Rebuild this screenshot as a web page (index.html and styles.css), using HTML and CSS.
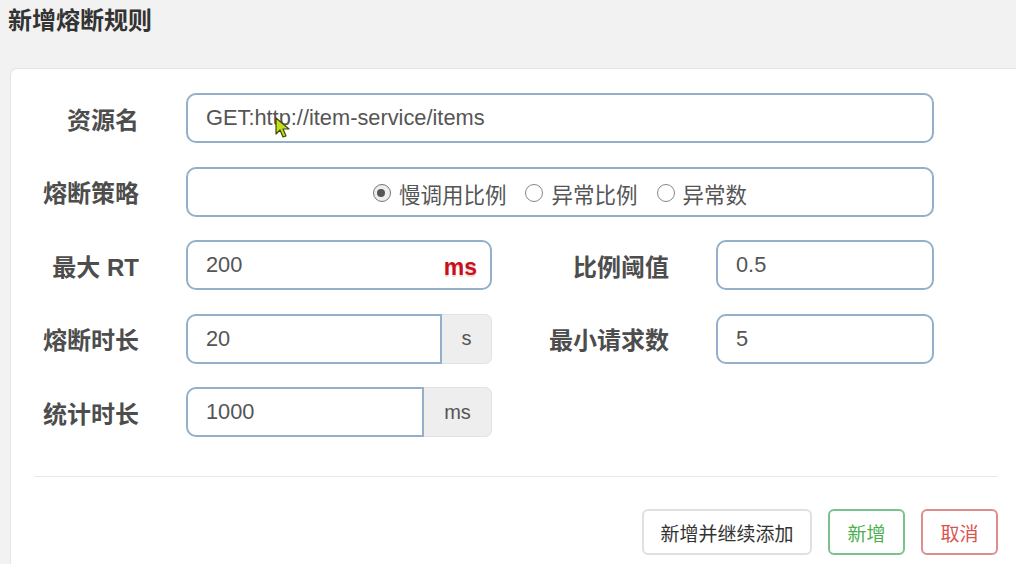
FILE: index.html
```html
<!DOCTYPE html>
<html lang="zh-CN">
<head>
<meta charset="utf-8">
<title>新增熔断规则</title>
<link rel="stylesheet" href="styles.css">
</head>
<body>
<div class="header"><h1 class="title">新增熔断规则</h1></div>
<div class="panel">
  <div class="form">
    <div class="row">
      <label class="label">资源名</label>
      <div class="field full">
        <input class="input" type="text" value="GET:http://item-service/items" readonly>
        <svg class="cursor" width="16" height="22" viewBox="0 0 16 22"><path d="M1 1 L1 17 L5 13 L8 20 L11 19 L8 12 L14 12 Z" fill="#c4dc1c" stroke="#3d4a10" stroke-width="1.2" stroke-linejoin="round"/></svg>
      </div>
    </div>
    <div class="row">
      <label class="label">熔断策略</label>
      <div class="field full radiobox">
        <span class="radio"><span class="dot checked"></span>慢调用比例</span>
        <span class="radio"><span class="dot"></span>异常比例</span>
        <span class="radio"><span class="dot"></span>异常数</span>
      </div>
    </div>
    <div class="row">
      <label class="label">最大 RT</label>
      <div class="field half">
        <input class="input" type="text" value="200" readonly>
        <span class="unit-red">ms</span>
      </div>
      <label class="label right">比例阈值</label>
      <div class="field small">
        <input class="input" type="text" value="0.5" readonly>
      </div>
    </div>
    <div class="row">
      <label class="label">熔断时长</label>
      <div class="group half">
        <input class="input grouped" type="text" value="20" readonly>
        <span class="addon addon-s">s</span>
      </div>
      <label class="label right">最小请求数</label>
      <div class="field small">
        <input class="input" type="text" value="5" readonly>
      </div>
    </div>
    <div class="row">
      <label class="label">统计时长</label>
      <div class="group half">
        <input class="input grouped" type="text" value="1000" readonly>
        <span class="addon addon-ms">ms</span>
      </div>
    </div>
  </div>
  <div class="footer">
    <button class="btn btn-default">新增并继续添加</button>
    <button class="btn btn-green">新增</button>
    <button class="btn btn-red">取消</button>
  </div>
</div>
</body>
</html>
```

FILE: styles.css
```css
* { box-sizing: border-box; }
html, body { margin: 0; padding: 0; }
body {
  width: 1016px;
  height: 564px;
  overflow: hidden;
  background: #f2f2f2;
  font-family: "Liberation Sans", "Noto Sans CJK SC", sans-serif;
  color: #555;
}
.header { height: 68px; padding: 2px 0 0 8px; }
.title {
  margin: 0;
  font-size: 24px;
  line-height: 34px;
  font-weight: bold;
  color: #333;
  font-family: "Noto Sans CJK SC", sans-serif;
}
.panel {
  margin-left: 10px;
  height: 496px;
  background: #fff;
  border-top: 1px solid #e4e4e4;
  border-left: 1px solid #e4e4e4;
  border-top-left-radius: 7px;
}
.form { padding-top: 24px; display: flex; flex-direction: column; gap: 23.5px; }
.row { display: flex; align-items: center; height: 50px; }
.label {
  width: 128px;
  margin-right: 47px;
  text-align: right;
  font-family: "Liberation Sans", "Noto Sans CJK SC", sans-serif;
  font-weight: bold;
  font-size: 24px;
  color: #4d4d4d;
  flex: none;
}
.label.right { width: 177px; margin-right: 47px; }
.field { position: relative; height: 50px; flex: none; }
.full { width: 748px; }
.half { width: 306px; }
.small { width: 218px; }
.input {
  width: 100%;
  height: 50px;
  border: 2px solid #93afca;
  border-radius: 10px;
  padding: 0 18px;
  font-family: "Liberation Sans", sans-serif;
  font-size: 21.8px;
  color: #555;
  background: #fff;
  outline: none;
}
.cursor { position: absolute; left: 89px; top: 24px; }
.radiobox {
  border: 2px solid #93afca;
  border-radius: 10px;
  display: flex;
  align-items: center;
  justify-content: center;
  gap: 19px;
  font-family: "Noto Sans CJK SC", sans-serif;
  font-size: 21.5px;
  color: #555;
  padding-top: 3px;
}
.radio { display: inline-flex; align-items: center; gap: 8px; }
.dot {
  width: 18px;
  height: 18px;
  border: 1.5px solid #888;
  border-radius: 50%;
  background: #fff;
  position: relative;
}
.dot.checked { background: #eee; border-color: #777; }
.dot.checked::after {
  content: "";
  position: absolute;
  left: 3.5px; top: 3.5px;
  width: 8px; height: 8px;
  border-radius: 50%;
  background: #555;
}
.unit-red {
  position: absolute;
  right: 15px;
  top: 14px;
  font-family: "Liberation Sans", sans-serif;
  font-weight: bold;
  font-size: 23px;
  color: #c8101a;
  text-shadow: 0 2px 1px #f3d6d6;
}
.group { display: flex; height: 50px; flex: none; }
.input.grouped { flex: 1; border-radius: 10px 0 0 10px; }
.addon {
  flex: none;
  display: flex;
  align-items: center;
  justify-content: center;
  background: #eee;
  border: 1px solid #e2e2e2;
  border-left: none;
  border-radius: 0 7px 7px 0;
  font-size: 20px;
  color: #555;
}
.addon-s { width: 50px; }
.addon-ms { width: 68px; }
.footer {
  margin: 39px 18px 0 23px;
  border-top: 1px solid #e8e8e8;
  padding-top: 32px;
  display: flex;
  justify-content: flex-end;
  gap: 16px;
}
.btn {
  height: 46px;
  padding: 0;
  background: #fff;
  border-radius: 6px;
  font-family: "Noto Sans CJK SC", sans-serif;
  font-size: 19px;
  white-space: nowrap;
  cursor: pointer;
}
.btn-default { border: 2px solid #e0e0e0; color: #333; width: 170px; }
.btn-green { border: 2px solid #7cc08c; color: #4caf50; width: 77px; }
.btn-red { border: 2px solid #de8c8f; color: #d9534f; width: 77px; }
```
